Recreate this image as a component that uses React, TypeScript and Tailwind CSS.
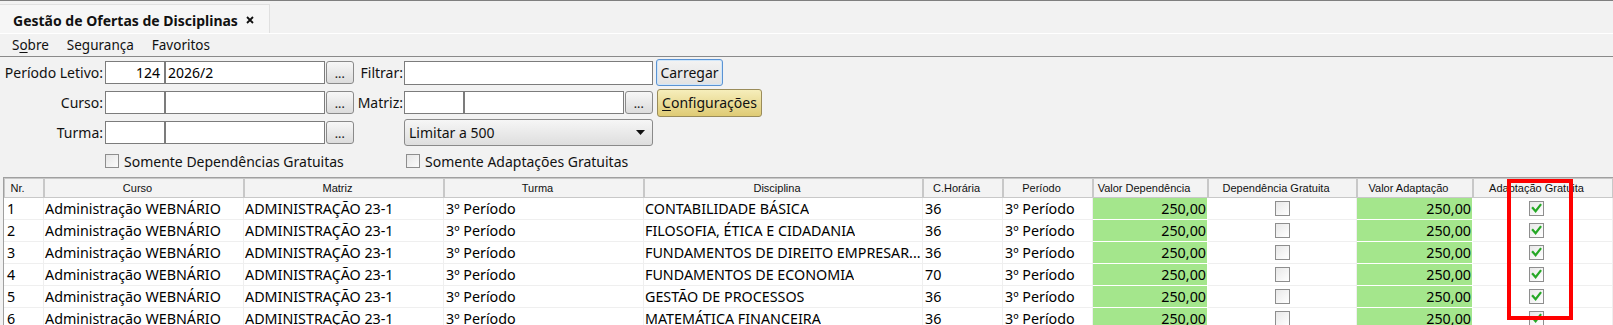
import React from "react";

type Col = { label: string; w: string };

const cols: Col[] = [
  { label: "Nr.", w: "w-[40px]" },
  { label: "Curso", w: "w-[200px]" },
  { label: "Matriz", w: "w-[200px]" },
  { label: "Turma", w: "w-[200px]" },
  { label: "Disciplina", w: "w-[279px]" },
  { label: "C.Horária", w: "w-[80px]" },
  { label: "Período", w: "w-[90px]" },
  { label: "Valor Dependência", w: "w-[115px]" },
  { label: "Dependência Gratuita", w: "w-[149px]" },
  { label: "Valor Adaptação", w: "w-[116px]" },
  { label: "Adaptação Gratuita", w: "w-[140px]" },
];

const rows = [
  { nr: "1", disc: "CONTABILIDADE BÁSICA", ch: "36" },
  { nr: "2", disc: "FILOSOFIA, ÉTICA E CIDADANIA", ch: "36" },
  { nr: "3", disc: "FUNDAMENTOS DE DIREITO EMPRESAR...", ch: "36" },
  { nr: "4", disc: "FUNDAMENTOS DE ECONOMIA", ch: "70" },
  { nr: "5", disc: "GESTÃO DE PROCESSOS", ch: "36" },
  { nr: "6", disc: "MATEMÁTICA FINANCEIRA", ch: "36" },
];

function Input({ w, h = "h-[23px]", children, right }: { w: string; h?: string; children?: React.ReactNode; right?: boolean }) {
  return (
    <div
      className={`${w} ${h} shrink-0 border border-[#7c7c7c] bg-white flex items-center text-[14px] text-black ${
        right ? "justify-end pr-[4px]" : "pl-[2px]"
      }`}
    >
      {children}
    </div>
  );
}

function DotsBtn() {
  return (
    <div className="w-[28px] h-[23px] shrink-0 rounded-[3px] border border-[#8a8a8a] bg-linear-to-b from-[#f7f7f7] to-[#dcdcdc] flex items-end justify-center pb-[4px]">
      <span className="text-[10px] leading-none font-bold tracking-[0.5px] text-[#222]">...</span>
    </div>
  );
}

function Label({ w, children }: { w: string; children?: React.ReactNode }) {
  return <div className={`${w} shrink-0 text-right text-[14px] text-[#111] pr-[1px] whitespace-nowrap`}>{children}</div>;
}

function FormCheck({ label }: { label: string }) {
  return (
    <div className="flex items-center gap-[5px]">
      <div className="w-[14px] h-[14px] border border-[#8e8e8e] bg-linear-to-br from-[#e6e6e6] to-[#fbfbfb]" />
      <span className="text-[14px] text-[#111] whitespace-nowrap">{label}</span>
    </div>
  );
}

function GridCheck({ checked }: { checked?: boolean }) {
  return (
    <div className="w-[15px] h-[15px] border border-[#8e8e8e] bg-linear-to-br from-[#e8e8e8] to-[#ffffff] flex items-center justify-center">
      {checked && (
        <svg width="11" height="11" viewBox="0 0 11 11">
          <path d="M1.8 5 L4.6 8.2 L9.4 2" stroke="#25a825" strokeWidth="2.2" fill="none" strokeLinecap="square" />
        </svg>
      )}
    </div>
  );
}

export default function App() {
  const cell = "h-[22px] flex items-center border-r border-b border-[#efefef] whitespace-nowrap overflow-hidden text-[14.3px] text-black";
  const green = "h-[22px] flex items-center justify-end pr-[1px] border-r border-b border-white bg-[#a4e68c] whitespace-nowrap text-[14.3px] text-black";
  return (
    <div className="relative w-[1613px] h-[325px] overflow-hidden bg-[#f2f2f2] font-['Noto_Sans',sans-serif] text-black">
      {/* top border */}
      <div className="h-px bg-[#7f7f7f]" />
      {/* tab strip */}
      <div className="h-[32px] pt-[3px] flex">
        <div className="w-[270px] h-[29px] bg-[#f6f6f6] border-t border-r border-[#e0e0e0] flex items-center pl-[13px] pt-[2px]">
          <span className="text-[14px] font-bold text-[#111] whitespace-nowrap">Gestão de Ofertas de Disciplinas</span>
          <svg className="ml-[8px]" width="8" height="8" viewBox="0 0 8 8">
            <path d="M1 1 L7 7 M7 1 L1 7" stroke="#111" strokeWidth="1.8" />
          </svg>
        </div>
      </div>
      <div className="h-px bg-white" />
      {/* menu */}
      <div className="h-[22px] flex items-center pl-[12px] gap-[18px] text-[13.5px] text-[#111]">
        <span>
          S<u className="underline-offset-2">o</u>bre
        </span>
        <span>Segurança</span>
        <span>Favoritos</span>
      </div>
      <div className="h-px bg-[#8a8a8a]" />

      {/* form */}
      <div className="pt-[4px] pb-[6px] flex flex-col gap-[7px]">
        {/* row 1 */}
        <div className="h-[23px] flex items-center">
          <Label w="w-[104px]">Período Letivo:</Label>
          <div className="w-px shrink-0" />
          <Input w="w-[60px]" right>
            124
          </Input>
          <Input w="w-[160px]">2026/2</Input>
          <div className="w-px shrink-0" />
          <DotsBtn />
          <Label w="w-[50px]">Filtrar:</Label>
          <Input w="w-[249px]" h="h-[24px]" />
          <div className="w-[3px] shrink-0" />
          <div className="w-[67px] h-[27px] shrink-0 rounded-[3px] border border-[#5b93d3] shadow-[inset_0_0_0_1px_#cfe6fa] bg-linear-to-b from-[#f3f3f3] to-[#e2e2e2] flex items-center justify-center text-[14px] text-[#111]">
            Carregar
          </div>
        </div>
        {/* row 2 */}
        <div className="h-[23px] flex items-center">
          <Label w="w-[104px]">Curso:</Label>
          <div className="w-px shrink-0" />
          <Input w="w-[60px]" />
          <Input w="w-[160px]" />
          <div className="w-px shrink-0" />
          <DotsBtn />
          <Label w="w-[50px]">Matriz:</Label>
          <Input w="w-[60px]" />
          <Input w="w-[160px]" />
          <div className="w-px shrink-0" />
          <DotsBtn />
          <div className="w-[4px] shrink-0" />
          <div className="w-[105px] h-[28px] shrink-0 rounded-[3px] border border-[#9a8c5a] bg-linear-to-b from-[#f6eebb] to-[#dfcb74] flex items-center justify-center text-[14px] text-[#111]">
            <span>
              <u className="underline-offset-2">C</u>onfigurações
            </span>
          </div>
        </div>
        {/* row 3 */}
        <div className="h-[23px] flex items-center">
          <Label w="w-[104px]">Turma:</Label>
          <div className="w-px shrink-0" />
          <Input w="w-[60px]" />
          <Input w="w-[160px]" />
          <div className="w-px shrink-0" />
          <DotsBtn />
          <div className="w-[50px] shrink-0" />
          <div className="w-[249px] h-[27px] shrink-0 rounded-[3px] border border-[#8a8a8a] bg-linear-to-b from-[#f6f6f6] to-[#dedede] flex items-center justify-between pl-[4px] pr-[7px] text-[14px] text-[#111]">
            <span>Limitar a 500</span>
            <svg width="9" height="5" viewBox="0 0 9 5">
              <path d="M0 0 H9 L4.5 5 Z" fill="#111" />
            </svg>
          </div>
        </div>
        {/* row 4 */}
        <div className="h-[20px] flex items-center">
          <div className="w-[105px] shrink-0" />
          <div className="w-[301px] shrink-0">
            <FormCheck label="Somente Dependências Gratuitas" />
          </div>
          <FormCheck label="Somente Adaptações Gratuitas" />
        </div>
      </div>

      {/* table */}
      <div className="ml-[3px] border-l border-t border-[#a0a0a0] bg-white h-[200px]">
        <div className="flex">
          {cols.map((c) => (
            <div
              key={c.label}
              className={`${c.w} shrink-0 h-[20px] border border-[#c8c8c8] bg-[#f3f3f3] flex items-center justify-center pr-[13px] text-[11px] font-['Liberation_Sans',Arial,sans-serif] text-[#111] whitespace-nowrap overflow-hidden`}
            >
              {c.label}
            </div>
          ))}
        </div>
        {rows.map((r) => (
          <div key={r.nr} className="flex">
            <div className={`w-[40px] shrink-0 pl-[3px] ${cell}`}>{r.nr}</div>
            <div className={`w-[200px] shrink-0 pl-[1px] ${cell}`}>Administração WEBNÁRIO</div>
            <div className={`w-[200px] shrink-0 pl-[1px] ${cell}`}>ADMINISTRAÇÃO 23-1</div>
            <div className={`w-[200px] shrink-0 pl-[2px] ${cell}`}>3º Período</div>
            <div className={`w-[279px] shrink-0 pl-[1px] ${cell}`}>
              <span className="truncate">{r.disc}</span>
            </div>
            <div className={`w-[80px] shrink-0 pl-[2px] ${cell}`}>{r.ch}</div>
            <div className={`w-[90px] shrink-0 pl-[2px] ${cell}`}>3º Período</div>
            <div className={`w-[115px] shrink-0 ${green}`}>250,00</div>
            <div className={`w-[149px] shrink-0 justify-center ${cell}`}>
              <GridCheck />
            </div>
            <div className={`w-[116px] shrink-0 ${green}`}>250,00</div>
            <div className={`w-[140px] shrink-0 justify-center pr-[12px] ${cell}`}>
              <GridCheck checked />
            </div>
          </div>
        ))}
      </div>

      {/* red highlight overlay */}
      <div className="absolute left-[1507px] top-[179px] w-[66px] h-[141px] border-[4px] border-[#ff0000]" />
    </div>
  );
}
